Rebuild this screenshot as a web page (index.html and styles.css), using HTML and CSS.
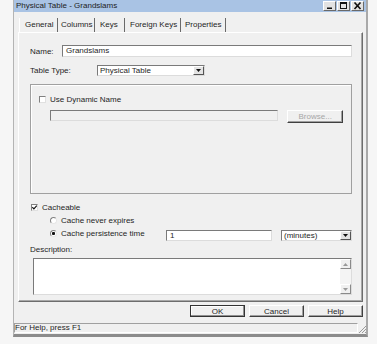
FILE: index.html
```html
<!DOCTYPE html>
<html>
<head>
<meta charset="utf-8">
<link rel="stylesheet" href="styles.css">
</head>
<body>
<div class="window">
  <div class="titlebar">
    <span class="title">Physical Table - Grandslams</span>
    <div class="tbtns">
      <span class="tbtn"><svg width="11" height="8" viewBox="0 0 11 8"><rect x="3" y="5.5" width="5" height="1.5" fill="#111"/></svg></span>
      <span class="tbtn"><svg width="11" height="8" viewBox="0 0 11 8"><rect x="2.5" y="0.5" width="6" height="6" fill="none" stroke="#111"/><rect x="2" y="0" width="7" height="2" fill="#111"/></svg></span>
      <span class="tbtn"><svg width="11" height="8" viewBox="0 0 11 8"><path d="M2.5 0.5 L8.5 7 M8.5 0.5 L2.5 7" stroke="#111" stroke-width="1.6"/></svg></span>
    </div>
  </div>
  <div class="client">
    <div class="tabs">
      <span class="tab active t-general">General</span>
      <span class="tab t-columns">Columns</span>
      <span class="tab t-keys">Keys</span>
      <span class="tab t-fkeys">Foreign Keys</span>
      <span class="tab t-props">Properties</span>
    </div>
    <div class="panel">
      <div class="row name-row">
        <span class="lbl lbl-name">Name:</span>
        <div class="field name-field">Grandslams</div>
      </div>
      <div class="row type-row">
        <span class="lbl lbl-type">Table Type:</span>
        <div class="combo type-combo">
          <span class="combo-text">Physical Table</span>
          <span class="drop"><svg width="5" height="3" viewBox="0 0 5 3"><path d="M0 0 H5 L2.5 3 Z" fill="#111"/></svg></span>
        </div>
      </div>
      <div class="group">
        <div class="check-row">
          <span class="checkbox"></span>
          <span>Use Dynamic Name</span>
        </div>
        <div class="browse-row">
          <div class="field disabled dyn-field"></div>
          <div class="btn browse">Browse...</div>
        </div>
      </div>
      <div class="check-row cache-row">
        <span class="checkbox"><svg width="5" height="5" viewBox="0 0 5 5"><path d="M0.3 2.2 L1.9 3.9 L4.8 0.6" fill="none" stroke="#111" stroke-width="1.2"/></svg></span>
        <span>Cacheable</span>
      </div>
      <div class="radio-row r1">
        <span class="radio"></span>
        <span>Cache never expires</span>
      </div>
      <div class="persist-row">
        <div class="radio-row r2">
          <span class="radio checked"></span>
          <span>Cache persistence time</span>
        </div>
        <div class="field time-field">1</div>
        <div class="combo unit-combo">
          <span class="combo-text">(minutes)</span>
          <span class="drop"><svg width="5" height="3" viewBox="0 0 5 3"><path d="M0 0 H5 L2.5 3 Z" fill="#111"/></svg></span>
        </div>
      </div>
      <div class="desc-label">Description:</div>
      <div class="textarea">
        <div class="scroll">
          <span class="sbtn"><svg width="5" height="3" viewBox="0 0 5 3"><path d="M0 3 H5 L2.5 0 Z" fill="#9a9a9a"/></svg></span>
          <span class="strack"></span>
          <span class="sbtn"><svg width="5" height="3" viewBox="0 0 5 3"><path d="M0 0 H5 L2.5 3 Z" fill="#9a9a9a"/></svg></span>
        </div>
      </div>
    </div>
    <div class="buttons">
      <div class="btn default">OK</div>
      <div class="btn">Cancel</div>
      <div class="btn">Help</div>
    </div>
    <div class="status">
      <div class="status-text">For Help, press F1</div>
      <div class="grip"><svg width="8" height="9" viewBox="0 0 8 9"><path d="M8 2 L1 9 M8 5 L4 9 M8 8 L7 9" stroke="#9a9a9a" stroke-width="1"/></svg></div>
    </div>
  </div>
</div>
</body>
</html>
```

FILE: styles.css
```css
* { box-sizing: border-box; }

body {
  margin: 0;
  background: #f6f6f6;
  font-family: "Liberation Sans", Arial, sans-serif;
  font-size: 8px;
  color: #1e1e1e;
}

.window {
  margin-left: 13px;
  width: 355px;
  background: #f0f0f0;
  border-left: 1px solid #b4b4b4;
  border-right: 2px solid #a9a9a9;
  border-bottom: 3px solid #8c8c8c;
}

.titlebar {
  height: 12px;
  background: #a9c3e4;
  display: flex;
  align-items: center;
  padding-left: 2px;
}

.title {
  flex: 1;
  line-height: 12px;
  color: #222;
}

.tbtns {
  display: flex;
  gap: 1px;
  margin-right: 2px;
}

.tbtn {
  width: 13px;
  height: 10px;
  background: #e2e2e2;
  border: 1px solid;
  border-color: #fff #6a6a6a #6a6a6a #fff;
  display: flex;
  align-items: center;
  justify-content: center;
}

.tbtn svg { display: block; }

.client {
  padding: 6px 3px 1px 4px;
}

.tabs {
  display: flex;
  height: 14px;
  padding-left: 1px;
}

.tab {
  line-height: 14px;
  border-right: 1px solid #6a6a6a;
  white-space: nowrap;
  overflow: hidden;
}

.tab.active { box-shadow: inset 1px 0 0 #fff; }

.t-general { width: 39px; padding-left: 6px; }
.t-columns { width: 37px; padding-left: 3px; }
.t-keys { width: 30px; padding-left: 5px; }
.t-fkeys { width: 56px; padding-left: 5px; }
.t-props { width: 45px; padding-left: 4px; }

.panel {
  border: 1px solid;
  border-color: #fff #6d6d6d #6d6d6d #fff;
  box-shadow: inset -1px -1px 0 #a8a8a8;
  padding: 12px 10px 6px 11px;
}

.row {
  display: flex;
  align-items: center;
}

.lbl { white-space: nowrap; }

.name-row { height: 12px; }
.lbl-name { width: 32px; }

.field {
  background: #fff;
  border: 1px solid;
  border-color: #7a7a7a #dcdcdc #dcdcdc #7a7a7a;
  height: 12px;
  line-height: 10px;
  padding-left: 3px;
  white-space: nowrap;
}

.name-field { flex: 1; }

.type-row {
  margin-top: 8px;
  height: 11px;
}

.lbl-type { width: 67px; }

.combo {
  display: flex;
  background: #fff;
  border: 1px solid;
  border-color: #7a7a7a #dcdcdc #dcdcdc #7a7a7a;
  height: 11px;
}

.type-combo { width: 108px; }

.combo-text {
  flex: 1;
  padding-left: 2px;
  line-height: 9px;
  white-space: nowrap;
}

.drop {
  width: 11px;
  background: #e4e4e4;
  border: 1px solid;
  border-color: #fff #555 #555 #fff;
  display: flex;
  align-items: center;
  justify-content: center;
}

.drop svg { display: block; }

.group {
  margin-top: 8px;
  height: 110px;
  border: 1px solid #a0a0a0;
  box-shadow: inset 1px 1px 0 #fff;
  padding: 10px 8px 0 8px;
}

.check-row {
  display: flex;
  align-items: center;
  gap: 4px;
  height: 8px;
  white-space: nowrap;
}

.checkbox {
  width: 7px;
  height: 7px;
  background: #fff;
  border: 1px solid;
  border-color: #808080 #e0e0e0 #e0e0e0 #808080;
  display: flex;
  align-items: center;
  justify-content: center;
  flex: none;
}

.checkbox svg { display: block; }

.browse-row {
  display: flex;
  align-items: flex-start;
  margin-top: 7px;
  padding-left: 11px;
  gap: 9px;
}

.dyn-field {
  width: 230px;
  height: 11px;
}

.field.disabled { background: #f0f0f0; }

.btn {
  display: flex;
  align-items: center;
  justify-content: center;
  background: #f0f0f0;
  border: 1px solid;
  border-color: #fff #404040 #404040 #fff;
  box-shadow: inset -1px -1px 0 #a0a0a0;
  white-space: nowrap;
}

.browse {
  width: 56px;
  height: 13px;
  color: #a6a6a6;
}

.cache-row {
  margin-top: 9px;
  padding-left: 1px;
}

.radio-row {
  display: flex;
  align-items: center;
  gap: 4px;
  height: 8px;
  white-space: nowrap;
}

.r1 {
  margin-top: 5px;
  padding-left: 20px;
}

.radio {
  width: 7px;
  height: 7px;
  border-radius: 50%;
  background: #fff;
  border: 1px solid;
  border-color: #808080 #e6e6e6 #e6e6e6 #808080;
  flex: none;
}

.radio.checked {
  background: radial-gradient(circle, #111 0 1.3px, #fff 1.8px);
}

.persist-row {
  display: flex;
  align-items: flex-start;
  margin-top: 5px;
  padding-left: 20px;
  height: 12px;
}

.r2 { width: 116px; }

.time-field {
  width: 106px;
  height: 11px;
  margin-top: 1px;
  line-height: 9px;
}

.unit-combo {
  width: 71px;
  margin-top: 1px;
  margin-left: 9px;
}

.desc-label {
  margin-top: 5px;
  line-height: 8px;
}

.textarea {
  margin: 4px 0 0 3px;
  height: 37px;
  background: #fff;
  border: 1px solid;
  border-color: #7a7a7a #dcdcdc #dcdcdc #7a7a7a;
  display: flex;
  justify-content: flex-end;
}

.scroll {
  width: 11px;
  display: flex;
  flex-direction: column;
  background: #f4f4f4;
}

.sbtn {
  height: 10px;
  background: #f0f0f0;
  border: 1px solid;
  border-color: #fff #8a8a8a #8a8a8a #fff;
  display: flex;
  align-items: center;
  justify-content: center;
}

.sbtn svg { display: block; }

.strack { flex: 1; }

.buttons {
  display: flex;
  justify-content: flex-end;
  gap: 4px;
  margin-top: 3px;
}

.buttons .btn {
  width: 55px;
  height: 12px;
}

.btn.default {
  border-color: #333;
  box-shadow: inset -1px -1px 0 #909090, inset 1px 1px 0 #fff;
}

.status {
  display: flex;
  margin: 6px -3px 0 -4px;
  height: 10px;
}

.status-text {
  flex: 1;
  border: 1px solid;
  border-color: #a0a0a0 #fff #fff #a0a0a0;
  line-height: 8px;
  white-space: nowrap;
}

.grip {
  width: 8px;
  display: flex;
  align-items: flex-end;
}

.grip svg { display: block; }
```
